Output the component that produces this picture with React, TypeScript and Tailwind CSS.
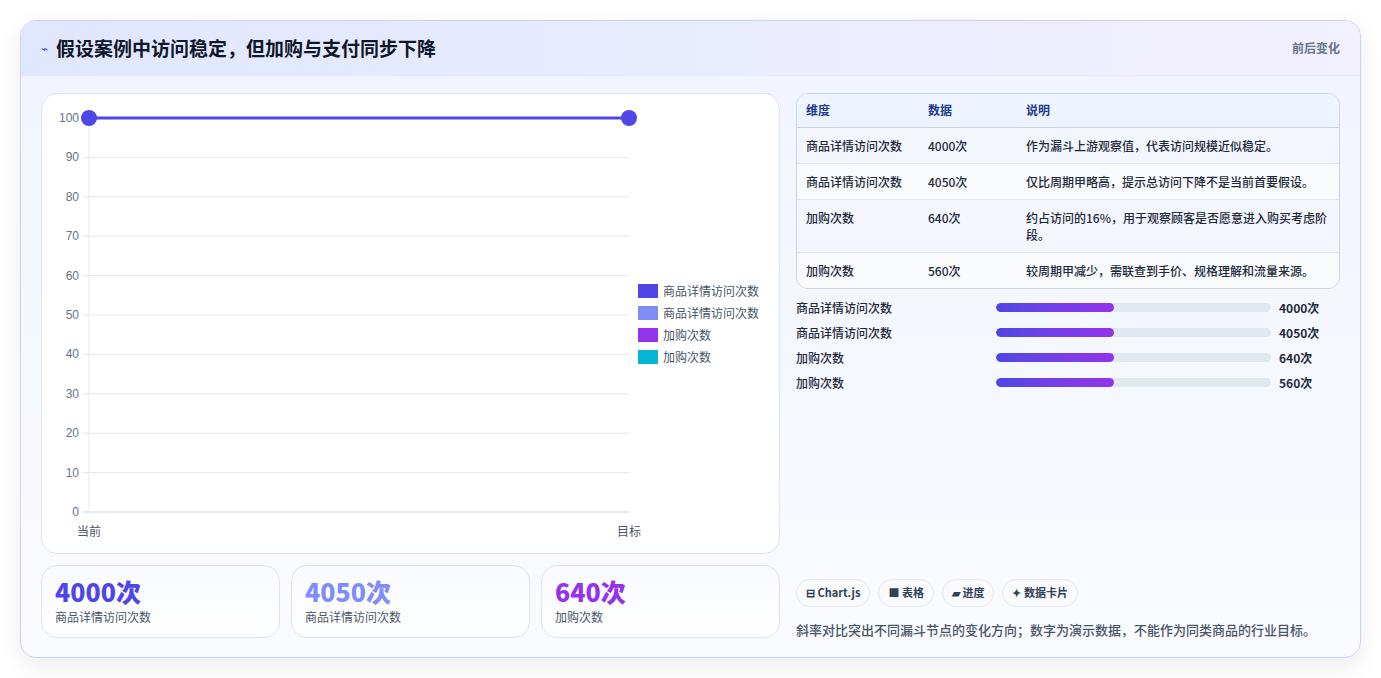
const font = { fontFamily: '"Noto Sans CJK SC", "Liberation Sans", sans-serif' };

const rows = [
  { dim: "商品详情访问次数", val: "4000次", note: "作为漏斗上游观察值，代表访问规模近似稳定。" },
  { dim: "商品详情访问次数", val: "4050次", note: "仅比周期甲略高，提示总访问下降不是当前首要假设。" },
  { dim: "加购次数", val: "640次", note: "约占访问的16%，用于观察顾客是否愿意进入购买考虑阶段。" },
  { dim: "加购次数", val: "560次", note: "较周期甲减少，需联查到手价、规格理解和流量来源。" },
];

const legend = [
  { label: "商品详情访问次数", color: "#4f46e5" },
  { label: "商品详情访问次数", color: "#818cf8" },
  { label: "加购次数", color: "#9333ea" },
  { label: "加购次数", color: "#06b6d4" },
];

const stats = [
  { v: "4000次", l: "商品详情访问次数", c: "text-[#4f46e5]" },
  { v: "4050次", l: "商品详情访问次数", c: "text-[#818cf8]" },
  { v: "640次", l: "加购次数", c: "text-[#9333ea]" },
];

function Chart() {
  const ticks = [100, 90, 80, 70, 60, 50, 40, 30, 20, 10, 0];
  const y = (v: number) => 24 + (100 - v) * 3.94;
  return (
    <svg width="739" height="461" className="block">
      {ticks.map((t) => (
        <g key={t}>
          <line x1="41" x2="587" y1={y(t)} y2={y(t)} stroke={t === 0 ? "#cbd5e1" : "#e2e8f0"} />
          <text x="37" y={y(t) + 4} textAnchor="end" fontSize="12" fill="#64748b" fontFamily="Liberation Sans, sans-serif">{t}</text>
        </g>
      ))}
      <line x1="47" x2="47" y1="24" y2={y(0)} stroke="#e2e8f0" />
      <line x1="47" x2="587" y1={y(100)} y2={y(100)} stroke="#4f46e5" strokeWidth="3" />
      <circle cx="47" cy={y(100)} r="8" fill="#4f46e5" />
      <circle cx="587" cy={y(100)} r="8" fill="#4f46e5" />
      <text x="47" y="442" textAnchor="middle" fontSize="12" fill="#475569" style={font}>当前</text>
      <text x="587" y="442" textAnchor="middle" fontSize="12" fill="#475569" style={font}>目标</text>
      {legend.map((l, i) => (
        <g key={i}>
          <rect x="596" y={190 + i * 22} width="20" height="14" fill={l.color} />
          <text x="621" y={202 + i * 22} fontSize="12" fill="#475569" style={font}>{l.label}</text>
        </g>
      ))}
    </svg>
  );
}

export default function App() {
  return (
    <div className="w-[1381px] h-[678px] bg-white pt-5 px-5" style={font}>
      <div className="rounded-2xl border border-[#c7d2fe] bg-gradient-to-b from-[#f1f4ff] to-[#fafbff] shadow-[0_8px_24px_rgba(0,0,0,0.08)] overflow-hidden h-[638px] flex flex-col">
        <div className="h-[55px] shrink-0 flex items-center justify-between px-5 bg-gradient-to-r from-[#e0e7ff] to-[#f3f0ff] border-b border-[#e0e7ff]">
          <div className="flex items-center gap-2">
            <span className="text-[#4f46e5] text-xs">⌁</span>
            <h1 className="text-[19px] font-bold text-[#0f172a]">假设案例中访问稳定，但加购与支付同步下降</h1>
          </div>
          <span className="text-xs font-bold text-[#64748b]">前后变化</span>
        </div>
        <div className="flex gap-4 px-5 pt-[17px] pb-[18px] flex-1">
          <div className="w-[739px] flex flex-col gap-[11px]">
            <div className="h-[461px] rounded-2xl border border-[#dbe4f3] bg-white overflow-hidden">
              <Chart />
            </div>
            <div className="flex gap-[11px]">
              {stats.map((s, i) => (
                <div key={i} className="flex-1 h-[73px] rounded-2xl border border-[#dbe4f3] bg-gradient-to-b from-[#f8faff] to-white px-[13px] pt-[9px]">
                  <div className={`text-[25px] font-extrabold leading-8 ${s.c}`}>{s.v}</div>
                  <div className="text-xs text-[#475569] mt-0.5">{s.l}</div>
                </div>
              ))}
            </div>
          </div>
          <div className="flex-1 flex flex-col justify-between">
            <div>
              <div className="rounded-xl border border-[#cbd5e1] overflow-hidden bg-[#f8fafc]">
                <table className="w-full text-xs text-[#1e293b]">
                  <thead>
                    <tr className="bg-[#eef4ff] text-[#1e3a8a] font-bold h-[33px] border-b border-[#cbd5e1]">
                      <th className="text-left font-bold pl-[9px] w-[131px]">维度</th>
                      <th className="text-left font-bold w-[98px]">数据</th>
                      <th className="text-left font-bold">说明</th>
                    </tr>
                  </thead>
                  <tbody>
                    {rows.map((r, i) => (
                      <tr key={i} className={`${i % 2 === 0 ? "bg-[#f3f6fd]" : "bg-[#f8fafc]"} ${i < 3 ? "border-b border-[#e2e8f0]" : ""} font-medium`}>
                        <td className="pl-[9px] py-[9px] align-top leading-[17px]">{r.dim}</td>
                        <td className="py-[9px] align-top leading-[17px]">{r.val}</td>
                        <td className="py-[9px] pr-3 align-top leading-[17px]">{r.note}</td>
                      </tr>
                    ))}
                  </tbody>
                </table>
              </div>
              <div className="mt-[10px] flex flex-col gap-[7px]">
                {rows.map((r, i) => (
                  <div key={i} className="flex items-center h-[18px] text-xs">
                    <span className="w-[200px] text-[#1e293b] font-medium">{r.dim}</span>
                    <div className="w-[275px] h-[9px] rounded-full bg-[#e2e8f0] overflow-hidden">
                      <div className="w-[43%] h-full rounded-full bg-gradient-to-r from-[#4f46e5] to-[#9333ea]" />
                    </div>
                    <span className="ml-2 font-bold text-[#1e293b]">{r.val}</span>
                  </div>
                ))}
              </div>
            </div>
            <div>
              <div className="flex gap-2">
                {["⊟ Chart.js", "■ 表格", "▰ 进度", "✦ 数据卡片"].map((c) => (
                  <span key={c} className="h-[28px] px-[9px] flex items-center rounded-full border border-[#e2e8f0] bg-[#f8fafc] text-[11px] font-bold text-[#334155]">{c}</span>
                ))}
              </div>
              <p className="mt-[13px] text-[13px] font-medium text-[#475569]">斜率对比突出不同漏斗节点的变化方向；数字为演示数据，不能作为同类商品的行业目标。</p>
            </div>
          </div>
        </div>
      </div>
    </div>
  );
}
